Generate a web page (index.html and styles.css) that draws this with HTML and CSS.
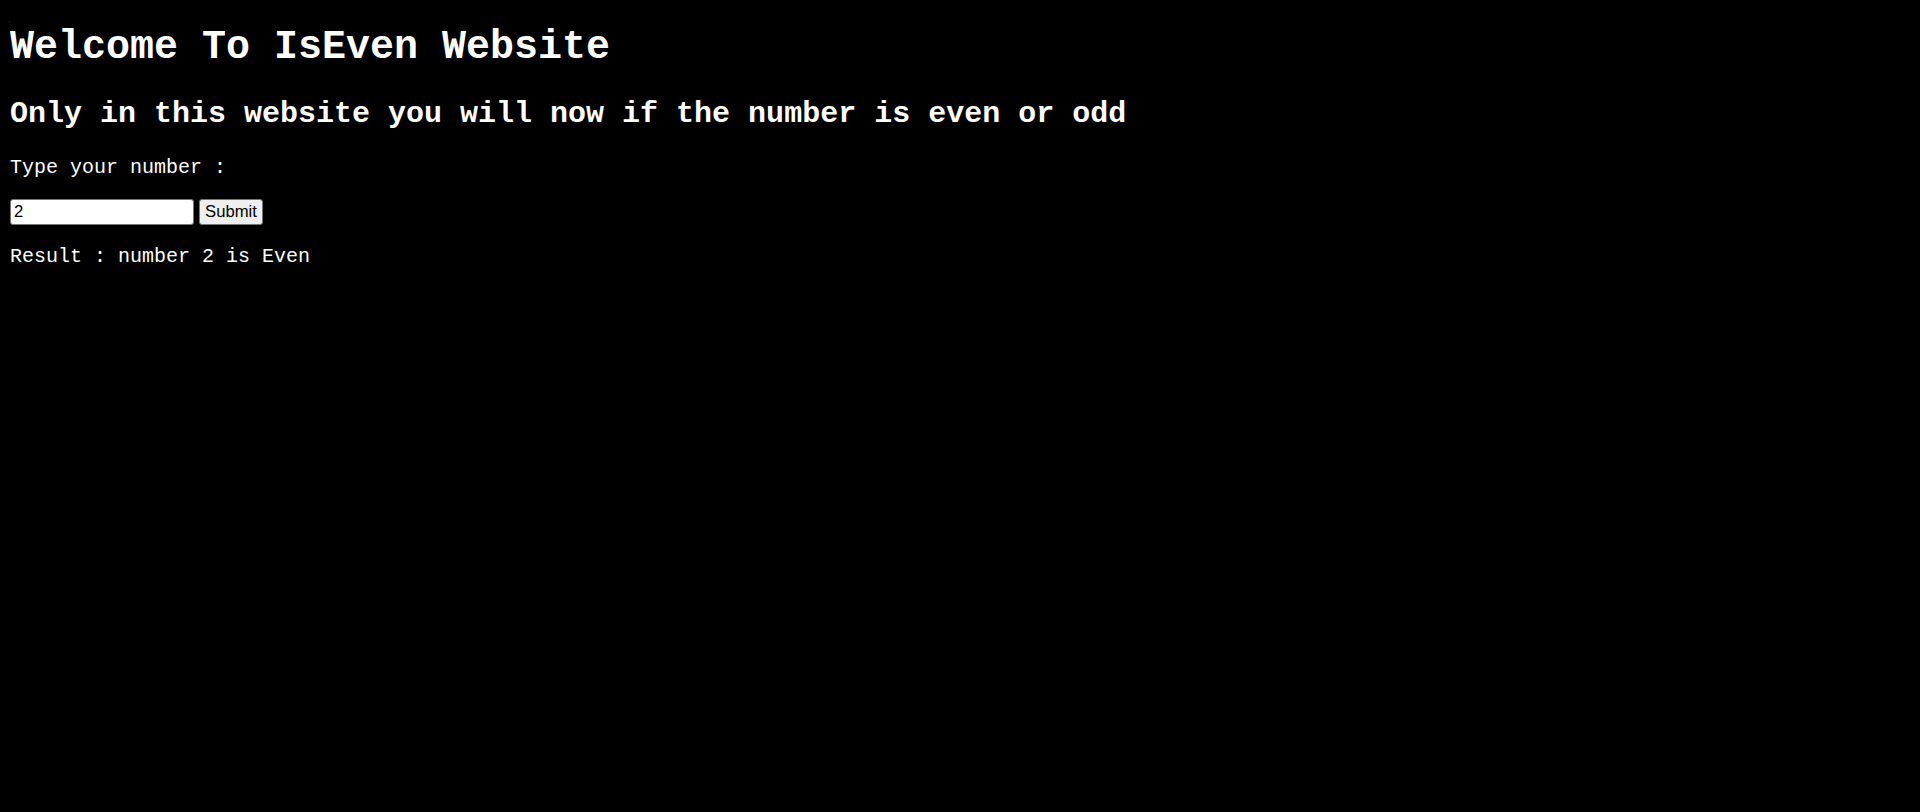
FILE: index.html
```html
<!DOCTYPE html>
<html>
<head>
<meta charset="utf-8">
<title>IsEven</title>
<link rel="stylesheet" href="styles.css">
</head>
<body class="page">
<h1 class="title">Welcome To IsEven Website</h1>
<h2 class="subtitle">Only in this website you will now if the number is even or odd</h2>
<p class="text">Type your number :</p>
<form class="form">
<input class="num-input" type="text" value="2"><button class="submit-btn" type="button">Submit</button>
</form>
<p class="text">Result : number 2 is Even</p>
</body>
</html>
```

FILE: styles.css
```css
html { background: #000; }
.page {
  margin: 10px;
  background: #000;
  color: #fff;
  font-family: "Liberation Mono", "Courier New", monospace;
  font-size: 20px;
}
.title {
  font-size: 40px;
  font-weight: bold;
  margin: 15px 0 26.8px;
}
.subtitle {
  font-size: 30px;
  font-weight: bold;
  margin: 24.9px 0;
}
.text {
  margin: 20px 0;
}
.form {
  display: flex;
  align-items: center;
  gap: 5px;
  margin: 0;
}
.num-input {
  box-sizing: border-box;
  width: 184px;
  height: 26px;
  padding: 1px 3px;
  border: 1.5px solid #767676;
  border-radius: 3px;
  background: #fff;
  color: #000;
  font-family: "Liberation Sans", Arial, sans-serif;
  font-size: 16.67px;
  margin: 0;
}
.submit-btn {
  box-sizing: border-box;
  height: 26px;
  width: 64px;
  padding: 0 4px;
  border: 1.5px solid #767676;
  border-radius: 3px;
  background: #efefef;
  color: #000;
  font-family: "Liberation Sans", Arial, sans-serif;
  font-size: 16.67px;
  margin: 0;
}
```
